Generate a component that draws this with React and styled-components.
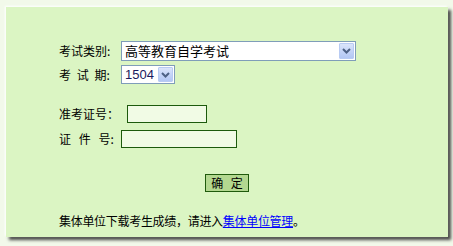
import React from 'react'
import styled, { createGlobalStyle } from 'styled-components'

const GlobalStyle = createGlobalStyle`
 html, body {
  margin: 0;
  padding: 0;
  background: #f2f9ea;
 }
 body {
  font-family: "Noto Sans CJK SC", "Liberation Sans", sans-serif;
  font-size: 12px;
  color: #000;
 }
`

const Page = styled.div`
 width: 453px;
 height: 246px;
 padding: 7px 0 0 6px;
 box-sizing: border-box;
`

const Panel = styled.div`
 width: 442px;
 height: 230px;
 box-sizing: border-box;
 background: #dbf5c3;
 padding: 34px 0 0 53px;
 box-shadow: -1px -1px 2px #ffffff, 3px 3px 3px rgba(40, 40, 40, 0.85);
`

const Row = styled.div`
 display: flex;
 align-items: center;
 height: ${(p) => p.h}px;
 margin-bottom: ${(p) => p.gap || 0}px;
`

const Label = styled.span`
 width: ${(p) => p.w}px;
 flex-shrink: 0;
 font-size: 12px;
 line-height: 14px;
 white-space: pre;
 word-spacing: ${(p) => p.spacing || 0}px;
`

const SelectBox = styled.div`
 display: flex;
 align-items: stretch;
 width: ${(p) => p.w}px;
 height: ${(p) => p.h}px;
 box-sizing: border-box;
 border: 1px solid #7f9db9;
 background: #fff;
`

const NativeSelect = styled.select`
 flex: 1;
 min-width: 0;
 appearance: none;
 -webkit-appearance: none;
 border: none;
 outline: none;
 background: transparent;
 padding: 0 0 0 3px;
 margin: 0;
 font-family: "Liberation Sans", "Noto Sans CJK SC", sans-serif;
 font-size: 13px;
 color: ${(p) => p.tint || '#000'};
`

const ArrowButton = styled.span`
 width: 15px;
 margin: 1px;
 box-sizing: border-box;
 border: 1px solid #b8cbf3;
 border-radius: 1px;
 background: linear-gradient(180deg, #dbe5fb 0%, #c3d3f7 55%, #b3c7f4 100%);
 display: flex;
 align-items: center;
 justify-content: center;
 pointer-events: none;
`

const TextInput = styled.input`
 width: ${(p) => p.w}px;
 height: 18px;
 box-sizing: border-box;
 margin: 0;
 padding: 0 3px;
 border: 1px solid #1d5a0c;
 background: #f1fbe5;
 font-size: 12px;
 outline: none;
`

const ButtonRow = styled.div`
 display: flex;
 justify-content: center;
 padding-right: 53px;
 margin-top: 26px;
`

const SubmitButton = styled.button`
 width: 44px;
 height: 18px;
 box-sizing: border-box;
 margin: 0;
 padding: 0;
 border: 1px solid #1f5a0c;
 background: #b3d890;
 font-family: "Noto Sans CJK SC", sans-serif;
 font-size: 12px;
 line-height: 14px;
 color: #000;
 word-spacing: 5px;
 white-space: pre;
`

const Note = styled.p`
 margin: 21px 0 0;
 font-size: 12px;
 line-height: 16px;
 letter-spacing: -0.3px;
`

const Link = styled.a`
 color: #0000ff;
 text-decoration: underline;
`

const Chevron = () => (
 <svg width="9" height="6" viewBox="0 0 9 6">
  <path d="M1 1 L4.5 4.5 L8 1" fill="none" stroke="#4d6185" strokeWidth="2" />
 </svg>
)

const App = () => (
 <Page>
  <GlobalStyle />
  <Panel>
   <Row h={20} gap={4}>
    <Label w={62}>考试类别:</Label>
    <SelectBox w={235} h={20}>
     <NativeSelect defaultValue="zk">
      <option value="zk">高等教育自学考试</option>
     </NativeSelect>
     <ArrowButton>
      <Chevron />
     </ArrowButton>
    </SelectBox>
   </Row>
   <Row h={19} gap={21}>
    <Label w={62} spacing={3}>考 试 期:</Label>
    <SelectBox w={54} h={19}>
     <NativeSelect defaultValue="1504" tint="#1a1a5e">
      <option value="1504">1504</option>
     </NativeSelect>
     <ArrowButton>
      <Chevron />
     </ArrowButton>
    </SelectBox>
   </Row>
   <Row h={18} gap={7}>
    <Label w={68}>准考证号：</Label>
    <TextInput w={80} />
   </Row>
   <Row h={18}>
    <Label w={62} spacing={5}>证 件 号:</Label>
    <TextInput w={116} />
   </Row>
   <ButtonRow>
    <SubmitButton type="button">确 定</SubmitButton>
   </ButtonRow>
   <Note>
    集体单位下载考生成绩，请进入<Link href="#">集体单位管理</Link>。
   </Note>
  </Panel>
 </Page>
)

export default App
